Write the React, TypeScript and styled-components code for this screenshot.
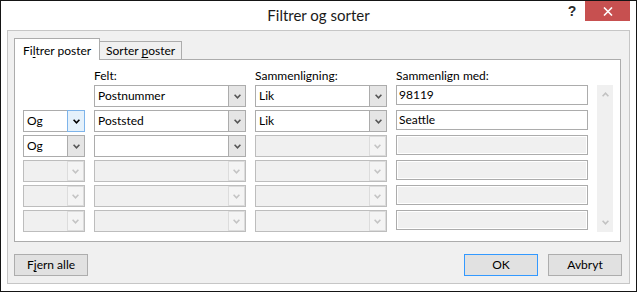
import React from 'react';
import styled, { createGlobalStyle } from 'styled-components';

const Global = createGlobalStyle`
  html, body { margin: 0; padding: 0; background: #fff; }
  body { font-family: Lato, "Noto Sans", sans-serif; font-size: 12px; color: #000; }
  * { box-sizing: border-box; }
`;

const Window = styled.div`
  width: 637px;
  height: 292px;
  border: 1px solid #151515;
  background: #fff;
  display: flex;
  flex-direction: column;
`;

const TitleBar = styled.div`
  height: 29px;
  flex: none;
  display: grid;
  grid-template-columns: 1fr auto 1fr;
  align-items: start;
`;

const Title = styled.div`
  grid-column: 2;
  padding-top: 4px;
  font-size: 15px;
  line-height: 20px;
  color: #1a1a1a;
`;

const Controls = styled.div`
  grid-column: 3;
  display: flex;
  justify-content: flex-end;
  padding-right: 6px;
`;

const HelpButton = styled.div`
  width: 26px;
  height: 20px;
  display: flex;
  align-items: center;
  justify-content: center;
  font-family: "Liberation Sans", sans-serif;
  font-weight: bold;
  font-size: 14px;
  color: #2b2b2b;
`;

const CloseButton = styled.div`
  width: 45px;
  height: 20px;
  background: #c75050;
  display: flex;
  align-items: center;
  justify-content: center;
`;

const Client = styled.div`
  flex: 1;
  margin: 0 6px 7px;
  border: 1px solid #c6c6c6;
  background: #f0f0f0;
  padding: 7px 7px 7px 6px;
  display: flex;
  flex-direction: column;
`;

const TabStrip = styled.div`
  height: 21px;
  flex: none;
  display: flex;
  align-items: flex-end;
`;

const Tab = styled.div<{ $active?: boolean }>`
  position: relative;
  z-index: 1;
  border: 1px solid #acacac;
  border-bottom: none;
  line-height: 16px;
  white-space: nowrap;
  ${p => p.$active
    ? `height: 22px; margin-bottom: -1px; width: 86px; padding: 4px 0 0 8px; background: #fff;`
    : `height: 18px; width: 82px; border-left: none; padding: 1px 0 0 6px; background: #f0f0f0;`}
`;

const Key = styled.span`
  text-decoration: underline;
  text-underline-offset: 2px;
`;

const Panel = styled.div`
  height: 183px;
  flex: none;
  margin-right: 1px;
  border: 1px solid #acacac;
  background: #fff;
  padding-left: 8px;
`;

const Grid = styled.div`
  display: grid;
  grid-template-columns: 62px 152px 132px 192px 16px;
  grid-template-rows: 22px repeat(6, 22px);
  column-gap: 9px;
  row-gap: 3px;
`;

const Cell = styled.div<{ $col: number; $row: number }>`
  grid-column: ${p => p.$col};
  grid-row: ${p => p.$row};
`;

const Label = styled.div<{ $col: number }>`
  grid-column: ${p => p.$col};
  grid-row: 1;
  padding-top: 8px;
  line-height: 16px;
  white-space: nowrap;
`;

const Combo = styled.div<{ $disabled?: boolean }>`
  height: 22px;
  display: flex;
  border: 1px solid ${p => (p.$disabled ? '#bdbdbd' : '#acacac')};
  background: ${p => (p.$disabled ? '#f0f0f0' : '#fff')};
`;

const ComboText = styled.div`
  flex: 1;
  padding-left: 3px;
  line-height: 20px;
  white-space: nowrap;
  overflow: hidden;
`;

type DropState = 'normal' | 'focused' | 'disabled';

const dropStyles: Record<DropState, string> = {
  normal: 'margin: -1px -1px -1px 0; width: 18px; border: 1px solid #acacac; background: #e5e5e5;',
  focused: 'margin: -1px -1px -1px 0; width: 18px; border: 1px solid #7eb4ea; background: #e5f1fb;',
  disabled: 'width: 17px; border: 1px solid #dcdcdc; background: #f4f4f4;',
};

const DropButton = styled.div<{ $state: DropState }>`
  flex: none;
  display: flex;
  align-items: center;
  justify-content: center;
  ${p => dropStyles[p.$state]}
`;

const TextBox = styled.div<{ $disabled?: boolean }>`
  height: 20px;
  border: 1px solid #acacac;
  padding-left: 2px;
  line-height: 18px;
  white-space: nowrap;
  background: ${p => (p.$disabled ? '#f0f0f0' : '#fff')};
  box-shadow: ${p => (p.$disabled ? 'inset 0 0 0 1px #fff' : 'none')};
`;

const ScrollBar = styled.div`
  grid-column: 5;
  grid-row: 2 / span 6;
  background: #f0f0f0;
  display: flex;
  flex-direction: column;
  justify-content: space-between;
  align-items: center;
  padding: 7px 0;
`;

const ButtonRow = styled.div`
  margin-top: 12px;
  height: 22px;
  flex: none;
  display: flex;
  justify-content: space-between;
`;

const ButtonGroup = styled.div`
  display: flex;
  gap: 10px;
`;

const Button = styled.div<{ $default?: boolean }>`
  width: 74px;
  height: 22px;
  border: 1px solid ${p => (p.$default ? '#3399ff' : '#adadad')};
  background: #e1e1e1;
  display: flex;
  align-items: center;
  justify-content: center;
  line-height: 16px;
`;

const ChevronSvg = styled.svg<{ $up?: boolean }>`
  display: block;
  transform: ${p => (p.$up ? 'rotate(180deg)' : 'none')};
`;

const Chevron = ({ color, up }: { color: string; up?: boolean }) => (
  <ChevronSvg $up={up} width="7" height="5" viewBox="0 0 7 5">
    <polyline points="0.6,0.8 3.5,3.8 6.4,0.8" fill="none" stroke={color} strokeWidth="1.6" />
  </ChevronSvg>
);

const chevronColor: Record<DropState, string> = {
  normal: '#555',
  focused: '#000',
  disabled: '#c4c4c4',
};

const ComboBox = ({ value, state }: { value?: string; state: DropState }) => (
  <Combo $disabled={state === 'disabled'}>
    <ComboText>{value}</ComboText>
    <DropButton $state={state}>
      <Chevron color={chevronColor[state]} />
    </DropButton>
  </Combo>
);

type Row = {
  op?: { value?: string; state: DropState };
  field: { value?: string; state: DropState };
  cmp: { value?: string; state: DropState };
  val: { value?: string; disabled?: boolean };
};

const rows: Row[] = [
  { field: { value: 'Postnummer', state: 'normal' }, cmp: { value: 'Lik', state: 'normal' }, val: { value: '98119' } },
  { op: { value: 'Og', state: 'focused' }, field: { value: 'Poststed', state: 'normal' }, cmp: { value: 'Lik', state: 'normal' }, val: { value: 'Seattle' } },
  { op: { value: 'Og', state: 'normal' }, field: { state: 'normal' }, cmp: { state: 'disabled' }, val: { disabled: true } },
  { op: { state: 'disabled' }, field: { state: 'disabled' }, cmp: { state: 'disabled' }, val: { disabled: true } },
  { op: { state: 'disabled' }, field: { state: 'disabled' }, cmp: { state: 'disabled' }, val: { disabled: true } },
  { op: { state: 'disabled' }, field: { state: 'disabled' }, cmp: { state: 'disabled' }, val: { disabled: true } },
];

export default function App() {
  return (
    <>
      <Global />
      <Window>
        <TitleBar>
          <Title>Filtrer og sorter</Title>
          <Controls>
            <HelpButton>?</HelpButton>
            <CloseButton>
              <svg width="10" height="9" viewBox="0 0 10 9">
                <path d="M1 0.5 L9 8.5 M9 0.5 L1 8.5" stroke="#fff" strokeWidth="1.6" fill="none" />
              </svg>
            </CloseButton>
          </Controls>
        </TitleBar>
        <Client>
          <TabStrip>
            <Tab $active>Fi<Key>l</Key>trer poster</Tab>
            <Tab>Sorter <Key>p</Key>oster</Tab>
          </TabStrip>
          <Panel>
            <Grid>
              <Label $col={2}>Felt:</Label>
              <Label $col={3}>Sammenligning:</Label>
              <Label $col={4}>Sammenlign med:</Label>
              {rows.map((r, i) => (
                <React.Fragment key={i}>
                  {r.op ? (
                    <Cell $col={1} $row={i + 2}>
                      <ComboBox value={r.op.value} state={r.op.state} />
                    </Cell>
                  ) : null}
                  <Cell $col={2} $row={i + 2}>
                    <ComboBox value={r.field.value} state={r.field.state} />
                  </Cell>
                  <Cell $col={3} $row={i + 2}>
                    <ComboBox value={r.cmp.value} state={r.cmp.state} />
                  </Cell>
                  <Cell $col={4} $row={i + 2}>
                    <TextBox $disabled={r.val.disabled}>{r.val.value}</TextBox>
                  </Cell>
                </React.Fragment>
              ))}
              <ScrollBar>
                <Chevron color="#c2c2c2" up />
                <Chevron color="#c2c2c2" />
              </ScrollBar>
            </Grid>
          </Panel>
          <ButtonRow>
            <Button>F<Key>j</Key>ern alle</Button>
            <ButtonGroup>
              <Button $default>OK</Button>
              <Button>Avbryt</Button>
            </ButtonGroup>
          </ButtonRow>
        </Client>
      </Window>
    </>
  );
}
